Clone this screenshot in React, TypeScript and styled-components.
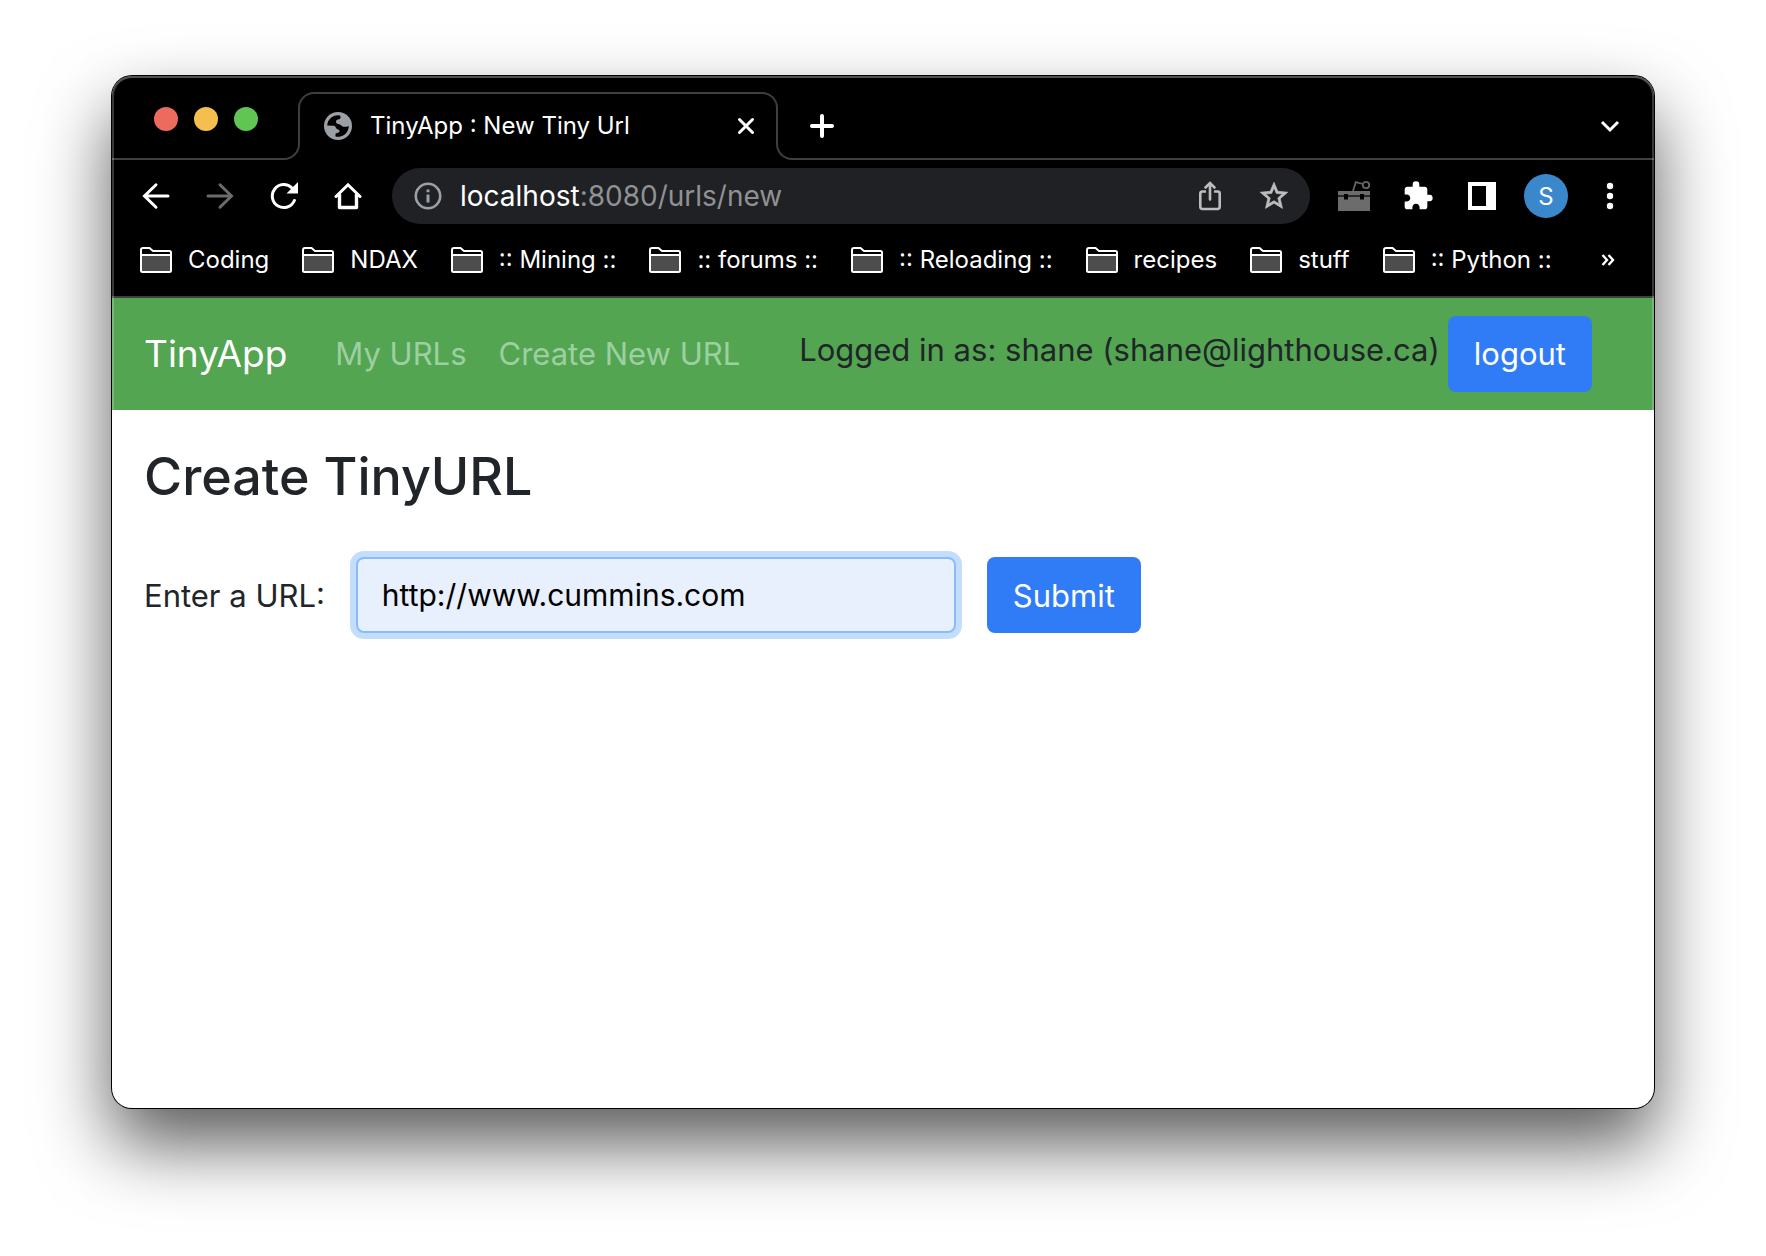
import React, { useState } from "react";
import styled, { createGlobalStyle } from "styled-components";

const GlobalStyle = createGlobalStyle`
  * { box-sizing: border-box; }
  body {
    margin: 0;
    background: #fff;
    font-family: Inter, "Liberation Sans", sans-serif;
  }
  button, input { font: inherit; }
`;

const LINE = "#3f3f3f";

const Desktop = styled.div`
  display: flex;
  min-height: 100vh;
  padding: 76px 112px 148px;
`;

const Window = styled.div`
  position: relative;
  display: flex;
  flex: 1;
  flex-direction: column;
  min-width: 0;
  overflow: hidden;
  border-radius: 20px;
  background: #fff;
  box-shadow: 0 0 0 1px #000, 0 36px 72px rgba(0, 0, 0, 0.65);

  &::after {
    content: "";
    position: absolute;
    inset: 0;
    border-radius: inherit;
    pointer-events: none;
    box-shadow: inset 0 2px 0 rgba(255, 255, 255, 0.12),
      inset 0 0 0 2px rgba(255, 255, 255, 0.22);
  }
`;

const Chrome = styled.header`
  background: #000;
  color: #fff;
  border-bottom: 2px solid ${LINE};
`;

/* Tab strip */

const TabStrip = styled.div`
  display: flex;
  height: 84px;
`;

const Lights = styled.div`
  position: relative;
  display: flex;
  gap: 16px;
  width: 186px;
  padding: 31px 0 0 42px;

  &::after {
    content: "";
    position: absolute;
    inset: 32px -2px 0 0;
    border: solid ${LINE};
    border-width: 0 2px 2px 0;
    border-bottom-right-radius: 16px;
    pointer-events: none;
  }
`;

const Light = styled.button<{ $color: string }>`
  width: 24px;
  height: 24px;
  padding: 0;
  border: 0;
  border-radius: 50%;
  background: ${(p) => p.$color};
`;

const Tab = styled.div`
  position: relative;
  display: flex;
  align-items: center;
  width: 480px;
  margin-top: 16px;
  padding: 0 22px 0 26px;

  &::before {
    content: "";
    position: absolute;
    inset: 0 0 18px;
    border: 2px solid ${LINE};
    border-bottom: 0;
    border-radius: 16px 16px 0 0;
    pointer-events: none;
  }
`;

const TabTitle = styled.span`
  flex: 1;
  margin-left: 18px;
  font-size: 24px;
  line-height: 32px;
  white-space: nowrap;
`;

const StripRest = styled.div`
  position: relative;
  display: flex;
  flex: 1;
  align-items: center;
  justify-content: space-between;
  padding: 16px 12px 0;

  &::before {
    content: "";
    position: absolute;
    inset: 32px 0 0 -2px;
    border: solid ${LINE};
    border-width: 0 0 2px 2px;
    border-bottom-left-radius: 16px;
    pointer-events: none;
  }
`;

const IconButton = styled.button<{ $tone?: string; $width?: number }>`
  display: flex;
  align-items: center;
  justify-content: center;
  width: ${(p) => p.$width ?? 64}px;
  height: 44px;
  padding: 0;
  border: 0;
  background: none;
  color: ${(p) => p.$tone ?? "#fff"};
`;

/* Toolbar */

const Toolbar = styled.div`
  display: flex;
  align-items: center;
  gap: 12px;
  padding: 8px 12px;
`;

const ToolGroup = styled.div`
  display: flex;
`;

const Omnibox = styled.div`
  display: flex;
  flex: 1;
  align-items: center;
  height: 56px;
  padding: 0 4px;
  border-radius: 28px;
  background: #202124;
`;

const Address = styled.span`
  flex: 1;
  font-size: 28px;
  line-height: 40px;
  color: #919193;
`;

const Host = styled.span`
  color: #fff;
`;

const Avatar = styled.span`
  display: grid;
  place-items: center;
  width: 44px;
  height: 44px;
  border-radius: 50%;
  background: #3a87cb;
  font-size: 24px;
`;

/* Bookmarks */

const Bookmarks = styled.nav`
  display: flex;
  align-items: center;
  gap: 33px;
  padding: 8px 38px 16px 28px;
  height: 64px;
`;

const Bookmark = styled.a`
  display: flex;
  align-items: center;
  gap: 16px;
  font-size: 24px;
  line-height: 32px;
  color: #fff;
  text-decoration: none;
  white-space: nowrap;
`;

const More = styled(IconButton)`
  margin-left: auto;
`;

/* Page */

const Navbar = styled.nav`
  display: flex;
  align-items: center;
  height: 112px;
  padding: 0 62px 0 32px;
  background: #53a551;
  font-size: 31px;
  line-height: 48px;
  white-space: nowrap;
`;

const Brand = styled.a`
  margin-right: 32px;
  font-size: 37px;
  color: #fff;
  text-decoration: none;
`;

const NavLink = styled.a`
  padding: 0 16px;
  color: #9dd0a1;
  text-decoration: none;
`;

const Account = styled.div`
  display: flex;
  align-items: center;
  gap: 8px;
  margin-left: auto;
  color: #212529;
`;

const AccountName = styled.span`
  padding-bottom: 8px;
`;

const PrimaryButton = styled.button`
  height: 76px;
  padding: 0 26px;
  border: 0;
  border-radius: 8px;
  background: #307cf7;
  color: #fff;
  font-size: 31px;
`;

const Main = styled.main`
  flex: 1;
  padding: 33px 32px;
  color: #212529;
`;

const Title = styled.h1`
  margin: 0 0 46px;
  font-size: 52px;
  font-weight: 500;
  line-height: 68px;
`;

const UrlForm = styled.form`
  display: flex;
  align-items: center;
  gap: 31px;
  font-size: 31px;
`;

const UrlInput = styled.input`
  width: 600px;
  height: 76px;
  padding: 0 24px;
  border: 2px solid #8bbcf9;
  border-radius: 8px;
  outline: none;
  background: #e8effd;
  box-shadow: 0 0 0 6px #c3ddfc;
  color: #000;
  font-size: 30px;
`;

const stroke = {
  fill: "none",
  stroke: "currentColor",
  strokeWidth: 3,
} as const;

const Globe = () => (
  <svg width="28" height="28" viewBox="0 0 28 28" aria-hidden="true">
    <circle cx="14" cy="14" r="14" fill="#9aa0a6" />
    <path
      fill="#000"
      d="M3.2 13.5A10.8 10.8 0 0 1 16 3.4L16.6 5C16.6 6.2 16 7 15 7.2C13 7.5 12 8 12 10C12 11.5 13.5 12 15 12.2C16.5 12.5 17.5 13.5 18.5 14.6C20.5 14.9 23 15 24.8 14A10.8 10.8 0 0 1 11.5 24.5V21.8C12.5 21 15.5 21 15.6 19.3C15.7 17.5 13.5 17.5 12.6 16.8C12 16 11.5 13.8 9.5 13.8Z"
    />
  </svg>
);

const Folder = () => (
  <svg width="32" height="26" viewBox="0 0 32 26" aria-hidden="true">
    <path
      d="M1 24V3Q1 1 3 1H9.5L13 4H29.5Q31 4 31 5.5V23.5Q31 25 29.5 25H2.5Q1 25 1 24Z"
      fill="#000"
      stroke="#fff"
      strokeWidth="2"
    />
    <path d="M2 9H30V24H2Z" fill="#4d4d4d" />
    <path d="M1 8H31" stroke="#fff" strokeWidth="2" />
  </svg>
);

const Arrow = ({ flip = false }: { flip?: boolean }) => (
  <svg width="28" height="28" viewBox="0 0 28 28" {...stroke} aria-hidden="true">
    <path
      strokeLinecap="round"
      d={flip ? "M2 14H25M14 2.8L25.5 14L14 25.2" : "M26 14H3M14 2.8L2.5 14L14 25.2"}
    />
  </svg>
);

const Reload = () => (
  <svg width="28" height="28" viewBox="0 0 28 28" {...stroke} aria-hidden="true">
    <path strokeLinecap="round" d="M24.4 18.5A11.5 11.5 0 1 1 22 6" />
    <path d="M28 0V11.5H16.5Z" fill="currentColor" stroke="none" />
  </svg>
);

const Home = () => (
  <svg width="28" height="28" viewBox="0 0 28 28" {...stroke} aria-hidden="true">
    <path d="M2 14.5L14 2.8L26 14.5" strokeLinecap="round" />
    <path d="M5.5 12V25.5H22.5V12" strokeWidth="3.4" strokeLinejoin="round" />
  </svg>
);

const Info = () => (
  <svg width="28" height="28" viewBox="0 0 28 28" aria-hidden="true">
    <circle cx="14" cy="14" r="12.2" fill="none" stroke="currentColor" strokeWidth="2.6" />
    <path d="M14 12.5V20.5M14 7.5V10.3" stroke="currentColor" strokeWidth="3" />
  </svg>
);

const Share = () => (
  <svg width="28" height="30" viewBox="0 0 28 30" {...stroke} aria-hidden="true">
    <path strokeWidth="2.6" d="M10 10.5H6.5Q4.3 10.5 4.3 12.5V25.5Q4.3 28 6.5 28H21.5Q23.7 28 23.7 25.5V12.5Q23.7 10.5 21.5 10.5H18" />
    <path strokeWidth="2.6" strokeLinecap="round" d="M14 18.5V2.5M9.5 6.5L14 2L18.5 6.5" />
  </svg>
);

const Star = () => (
  <svg width="30" height="30" viewBox="0 0 24 24" fill="currentColor" aria-hidden="true">
    <path
      transform="translate(-1.2 -1.2) scale(1.1)"
      stroke="currentColor"
      strokeWidth="0.5"
      d="M22 9.24l-7.19-.62L12 2 9.19 8.63 2 9.24l5.46 4.73L5.82 21 12 17.27 18.18 21l-1.63-7.03L22 9.24zM12 15.4l-3.76 2.27 1-4.28-3.32-2.88 4.38-.38L12 6.1l1.71 4.04 4.38.38-3.32 2.88 1 4.28L12 15.4z"
    />
  </svg>
);

const Toolbox = () => (
  <svg width="32" height="32" viewBox="0 0 32 32" aria-hidden="true">
    <path d="M0 11H32V31H0Z" fill="#6c6c6c" />
    <path d="M0 16H32" stroke="#111" strokeWidth="1.4" />
    <path d="M6 14H10V19.5H6ZM22 14H26V19.5H22Z" fill="#000" />
    <path d="M15 11L17.8 2.2L25 4" fill="none" stroke="#666" strokeWidth="1.8" />
    <circle cx="28" cy="5" r="3.2" fill="none" stroke="#666" strokeWidth="1.8" />
  </svg>
);

const Puzzle = () => (
  <svg width="32" height="32" viewBox="0 0 24 24" fill="currentColor" aria-hidden="true">
    <path d="M20.5 11H19V7c0-1.1-.9-2-2-2h-4V3.500a2.500 2.500 0 0 0-5 0V5H4c-1.100 0-1.990.9-1.990 2v3.800H3.500c1.490 0 2.700 1.210 2.700 2.700s-1.210 2.700-2.700 2.700H2V20c0 1.100.9 2 2 2h3.800v-1.500c0-1.490 1.210-2.700 2.700-2.700s2.700 1.210 2.700 2.700V22H17c1.100 0 2-.9 2-2v-4h1.500a2.500 2.500 0 0 0 0-5z" />
  </svg>
);

const SidePanel = () => (
  <svg width="28" height="28" viewBox="0 0 28 28" aria-hidden="true">
    <path d="M0 0H28V28H0Z" fill="#fff" />
    <path d="M4 4H18V24H4Z" fill="#000" />
  </svg>
);

const Dots = () => (
  <svg width="8" height="28" viewBox="0 0 8 28" fill="currentColor" aria-hidden="true">
    <circle cx="4" cy="4" r="3.2" />
    <circle cx="4" cy="14" r="3.2" />
    <circle cx="4" cy="24" r="3.2" />
  </svg>
);

const Close = () => (
  <svg width="20" height="20" viewBox="0 0 20 20" {...stroke} aria-hidden="true">
    <path strokeLinecap="round" d="M3.500 3.500L16.500 16.500M16.500 3.500L3.500 16.500" />
  </svg>
);

const Plus = () => (
  <svg width="24" height="24" viewBox="0 0 24 24" {...stroke} aria-hidden="true">
    <path strokeLinecap="round" strokeWidth="4" d="M12 2V22M2 12H22" />
  </svg>
);

const Chevron = () => (
  <svg width="20" height="20" viewBox="0 0 20 20" {...stroke} aria-hidden="true">
    <path d="M2 6L10 14L18 6" />
  </svg>
);

const DoubleChevron = () => (
  <svg width="14" height="14" viewBox="0 0 14 14" {...stroke} strokeWidth={2.4} aria-hidden="true">
    <path d="M1.500 2L6 7L1.500 12M7.500 2L12 7L7.500 12" />
  </svg>
);

const bookmarks = [
  "Coding",
  "NDAX",
  ":: Mining ::",
  ":: forums ::",
  ":: Reloading ::",
  "recipes",
  "stuff",
  ":: Python ::",
];

export default function App() {
  const [url, setUrl] = useState("http://www.cummins.com");

  return (
    <>
      <GlobalStyle />
      <Desktop>
        <Window>
          <Chrome>
            <TabStrip>
              <Lights>
                <Light $color="#ed6a5e" aria-label="Close window" />
                <Light $color="#f4bf4f" aria-label="Minimize window" />
                <Light $color="#61c554" aria-label="Zoom window" />
              </Lights>
              <Tab>
                <Globe />
                <TabTitle>TinyApp : New Tiny Url</TabTitle>
                <IconButton $width={20} aria-label="Close tab"><Close /></IconButton>
              </Tab>
              <StripRest>
                <IconButton aria-label="New tab"><Plus /></IconButton>
                <IconButton aria-label="Search tabs"><Chevron /></IconButton>
              </StripRest>
            </TabStrip>
            <Toolbar>
              <ToolGroup>
                <IconButton aria-label="Back"><Arrow /></IconButton>
                <IconButton $tone="#6b6b6b" aria-label="Forward"><Arrow flip /></IconButton>
                <IconButton aria-label="Reload"><Reload /></IconButton>
                <IconButton aria-label="Home"><Home /></IconButton>
              </ToolGroup>
              <Omnibox>
                <IconButton $tone="#9aa0a6" aria-label="Site information"><Info /></IconButton>
                <Address><Host>localhost</Host>:8080/urls/new</Address>
                <IconButton $tone="#bdbdbd" aria-label="Share"><Share /></IconButton>
                <IconButton $tone="#bdbdbd" aria-label="Bookmark this tab"><Star /></IconButton>
              </Omnibox>
              <ToolGroup>
                <IconButton aria-label="Toolbox"><Toolbox /></IconButton>
                <IconButton aria-label="Extensions"><Puzzle /></IconButton>
                <IconButton aria-label="Side panel"><SidePanel /></IconButton>
                <IconButton aria-label="Profile"><Avatar>S</Avatar></IconButton>
                <IconButton aria-label="Menu"><Dots /></IconButton>
              </ToolGroup>
            </Toolbar>
            <Bookmarks aria-label="Bookmarks">
              {bookmarks.map((name) => (
                <Bookmark key={name} href="#">
                  <Folder />
                  {name}
                </Bookmark>
              ))}
              <More $width={16} aria-label="More bookmarks"><DoubleChevron /></More>
            </Bookmarks>
          </Chrome>
          <Navbar>
            <Brand href="#">TinyApp</Brand>
            <NavLink href="#">My URLs</NavLink>
            <NavLink href="#">Create New URL</NavLink>
            <Account>
              <AccountName>Logged in as: shane (shane@lighthouse.ca)</AccountName>
              <PrimaryButton>logout</PrimaryButton>
            </Account>
          </Navbar>
          <Main>
            <Title>Create TinyURL</Title>
            <UrlForm onSubmit={(event) => event.preventDefault()}>
              <label htmlFor="long-url">Enter a URL:</label>
              <UrlInput
                id="long-url"
                type="text"
                value={url}
                onChange={(event) => setUrl(event.target.value)}
              />
              <PrimaryButton type="submit">Submit</PrimaryButton>
            </UrlForm>
          </Main>
        </Window>
      </Desktop>
    </>
  );
}
